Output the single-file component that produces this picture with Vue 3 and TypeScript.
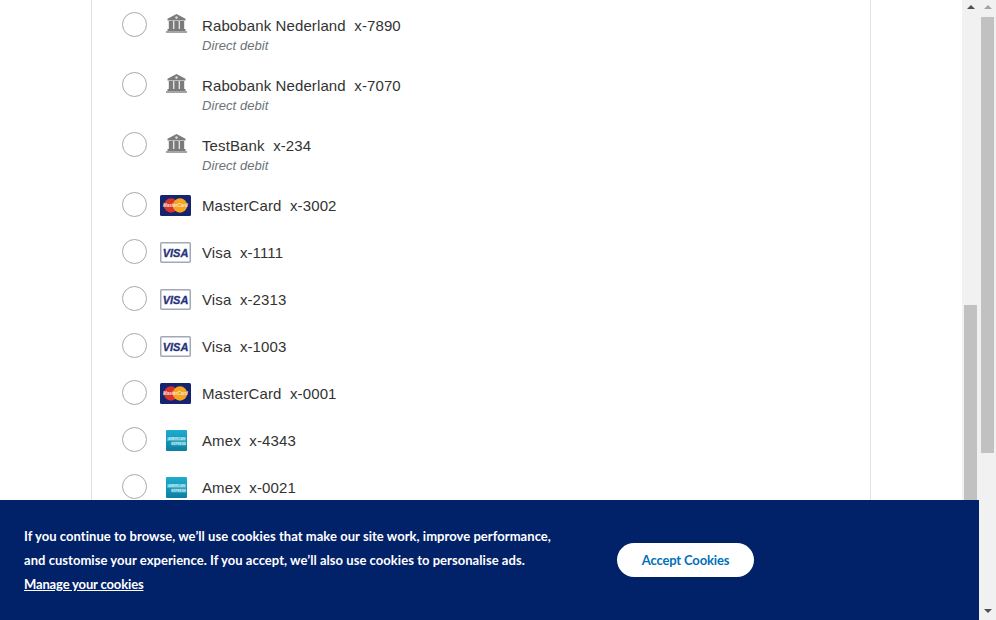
<script setup lang="ts">
type Kind = 'bank' | 'mc' | 'visa' | 'amex'
interface Row { kind: Kind; name: string; num: string; sub?: string }
const rows: Row[] = [
  { kind: 'bank', name: 'Rabobank Nederland', num: 'x-7890', sub: 'Direct debit' },
  { kind: 'bank', name: 'Rabobank Nederland', num: 'x-7070', sub: 'Direct debit' },
  { kind: 'bank', name: 'TestBank', num: 'x-234', sub: 'Direct debit' },
  { kind: 'mc', name: 'MasterCard', num: 'x-3002' },
  { kind: 'visa', name: 'Visa', num: 'x-1111' },
  { kind: 'visa', name: 'Visa', num: 'x-2313' },
  { kind: 'visa', name: 'Visa', num: 'x-1003' },
  { kind: 'mc', name: 'MasterCard', num: 'x-0001' },
  { kind: 'amex', name: 'Amex', num: 'x-4343' },
  { kind: 'amex', name: 'Amex', num: 'x-0021' },
]
</script>

<template>
  <div class="page">
    <div class="content">
      <main class="pane">
        <div class="card">
          <div v-for="(r, i) in rows" :key="i" class="row" :class="{ tall: r.sub }">
            <span class="radio"></span>
            <span class="slot">
              <svg v-if="r.kind === 'bank'" class="narrow" width="21" height="19" viewBox="0 0 21 19">
                <path d="M10.500 0 L19.500 4.800 V6.500 H1.500 V4.800 Z" fill="#7b7b7b" />
                <circle cx="10.500" cy="3.600" r="1.300" fill="#d8d8d8" />
                <rect x="2.800" y="7" width="4.400" height="8" fill="#7b7b7b" />
                <rect x="8.300" y="7" width="4.400" height="8" fill="#7b7b7b" />
                <rect x="13.800" y="7" width="4.400" height="8" fill="#7b7b7b" />
                <rect x="1.500" y="15" width="18" height="2" fill="#7b7b7b" />
                <rect x="0" y="17" width="21" height="2" fill="#a5a5a5" />
              </svg>
              <svg v-else-if="r.kind === 'mc'" width="31" height="21" viewBox="0 0 31 21">
                <rect width="31" height="21" rx="1.500" fill="#14246f" />
                <circle cx="11" cy="10.500" r="7.200" fill="#d8322d" />
                <circle cx="20" cy="10.500" r="7.200" fill="#f6a51f" />
                <text x="15.500" y="12.300" text-anchor="middle" class="mc-label">MasterCard</text>
              </svg>
              <svg v-else-if="r.kind === 'visa'" width="31" height="21" viewBox="0 0 31 21">
                <rect x="0.750" y="0.750" width="29.500" height="19.500" rx="1" fill="#fff" stroke="#a2a7ba" stroke-width="1.500" />
                <text x="15.500" y="14.500" text-anchor="middle" class="visa-label">VISA</text>
              </svg>
              <svg v-else class="narrow" width="21" height="21" viewBox="0 0 21 21">
                <defs>
                  <linearGradient id="amexFill" x1="0" y1="0" x2="0" y2="1">
                    <stop offset="0" stop-color="#1fadd0" />
                    <stop offset="1" stop-color="#0b7f9f" />
                  </linearGradient>
                </defs>
                <rect width="21" height="21" rx="1" fill="url(#amexFill)" />
                <rect x="1" y="7" width="19" height="4" fill="#8fd3e6" opacity="0.45" />
                <rect x="6" y="11.500" width="14" height="4" fill="#8fd3e6" opacity="0.45" />
                <text x="10.500" y="10.200" text-anchor="middle" class="amex-label">AMERICAN</text>
                <text x="20" y="14.700" text-anchor="end" class="amex-label">EXPRESS</text>
              </svg>
            </span>
            <div class="text">
              <div class="name">{{ r.name }}&nbsp; {{ r.num }}</div>
              <div v-if="r.sub" class="sub">{{ r.sub }}</div>
            </div>
          </div>
        </div>
      </main>
      <div class="scrollbar inner">
        <span class="arrow up dark"></span>
        <div class="track"><span class="thumb"></span></div>
      </div>
      <div class="scrollbar outer">
        <span class="arrow up light"></span>
        <div class="track"><span class="thumb"></span></div>
        <span class="arrow down dark"></span>
      </div>
    </div>
    <section class="banner">
      <div class="copy">
        <p>If you continue to browse, we’ll use cookies that make our site work, improve performance,</p>
        <p>and customise your experience. If you accept, we’ll also use cookies to personalise ads.</p>
        <p><a href="#" class="manage">Manage your cookies</a></p>
      </div>
      <button type="button" class="accept">Accept Cookies</button>
    </section>
  </div>
</template>

<style scoped>
.page {
  position: relative;
  width: 996px;
  height: 620px;
  overflow: hidden;
  background: #fff;
}
.content {
  display: flex;
  height: 620px;
}
.pane {
  width: 962px;
  padding-left: 91px;
  box-sizing: border-box;
}
.card {
  width: 780px;
  height: 620px;
  box-sizing: border-box;
  border-left: 1px solid #e1e1e1;
  border-right: 1px solid #e1e1e1;
  padding-left: 30px;
}
.row {
  display: flex;
  align-items: flex-start;
  height: 47px;
  padding-top: 12px;
  box-sizing: border-box;
}
.row.tall {
  height: 60px;
}
.radio {
  width: 25px;
  height: 25px;
  box-sizing: border-box;
  border: 1px solid #a9a9a9;
  border-radius: 50%;
  background: #fff;
  flex: none;
}
.slot {
  width: 31px;
  height: 21px;
  margin: 3px 0 0 13px;
  display: flex;
  justify-content: center;
  flex: none;
}
.slot svg {
  display: block;
  flex: none;
}
.slot svg.narrow {
  margin-left: 2px;
}
.row.tall .slot svg {
  margin-top: -1px;
}
.mc-label {
  font-family: "Liberation Sans", Arial, sans-serif;
  font-size: 4.500px;
  font-weight: 700;
  font-style: italic;
  fill: #f7e6dc;
}
.visa-label {
  font-family: "Liberation Sans", Arial, sans-serif;
  font-size: 11px;
  font-weight: 700;
  font-style: italic;
  fill: #27327a;
  stroke: #27327a;
  stroke-width: 0.3px;
}
.amex-label {
  font-family: "Liberation Sans", Arial, sans-serif;
  font-size: 3.200px;
  font-weight: 700;
  fill: #c4ecf5;
}
.text {
  margin: 4px 0 0 11px;
  font-family: "Liberation Sans", Arial, sans-serif;
  color: #333;
}
.name {
  font-size: 15px;
  line-height: 20px;
  letter-spacing: 0.11px;
}
.sub {
  margin-top: 1px;
  font-size: 13px;
  line-height: 18px;
  font-style: italic;
  letter-spacing: 0.05px;
  color: #6c7378;
}
.scrollbar {
  width: 17px;
  height: 620px;
  flex: none;
  background: #f1f1f1;
  display: flex;
  flex-direction: column;
  align-items: center;
}
.arrow {
  width: 0;
  height: 0;
  border-left: 4px solid transparent;
  border-right: 4px solid transparent;
  flex: none;
}
.arrow.up {
  margin: 5px 0 5px;
  border-bottom: 4px solid #505050;
}
.arrow.up.light {
  border-bottom-color: #a3a3a3;
}
.arrow.down {
  margin: 5px 0 7px;
  border-top: 4px solid #505050;
}
.track {
  flex: 1;
  width: 13px;
  margin-top: 3px;
}
.thumb {
  display: block;
  width: 13px;
  background: #c1c1c1;
}
.inner .thumb {
  margin-top: 288px;
  height: 315px;
}
.outer .thumb {
  height: 436px;
}
.banner {
  position: absolute;
  left: 0;
  top: 500px;
  width: 979px;
  height: 120px;
  background: #012169;
  display: flex;
  align-items: flex-start;
  box-sizing: border-box;
  padding: 24px 0 0 24px;
  font-family: Lato, "Noto Sans", sans-serif;
}
.copy {
  width: 593px;
  color: #fff;
  font-size: 13px;
  font-weight: 700;
  line-height: 24px;
  letter-spacing: 0.045px;
}
.copy p {
  margin: 0;
}
.manage {
  color: #fff;
  text-decoration: underline;
  letter-spacing: -0.15px;
}
.accept {
  width: 137px;
  height: 34px;
  margin-top: 19px;
  border: 0;
  border-radius: 17px;
  background: #fff;
  color: #0070ba;
  font-family: inherit;
  font-size: 13px;
  font-weight: 700;
  letter-spacing: -0.15px;
  padding: 0;
}
</style>
